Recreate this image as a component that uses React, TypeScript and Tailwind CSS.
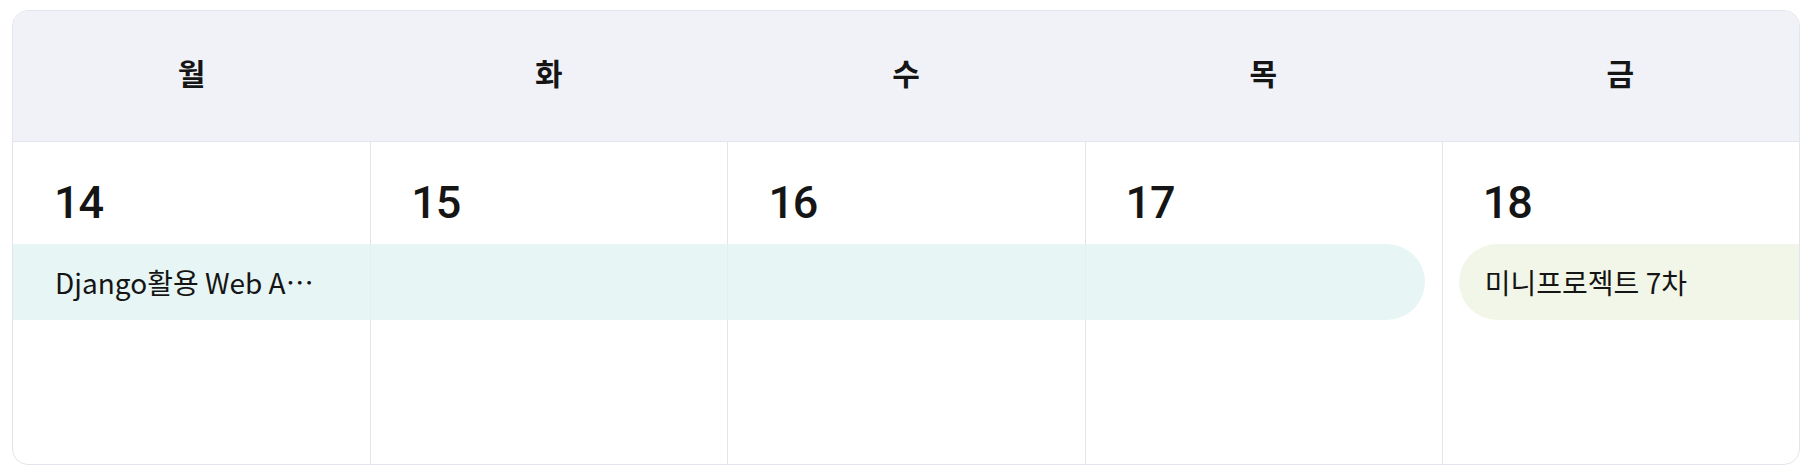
const DAYS = ["월", "화", "수", "목", "금"];
const DATES = [14, 15, 16, 17, 18];

const COL_START = [
  "col-start-1",
  "col-start-2",
  "col-start-3",
  "col-start-4",
  "col-start-5",
];

export default function App() {
  return (
    <div
      className="pt-[10px] pl-[12px] pr-[10px] bg-white"
      style={{ fontFamily: '"Noto Sans CJK KR", "Noto Sans", sans-serif' }}
    >
      <div className="h-[455px] flex flex-col rounded-2xl border border-[#e3e5ec] overflow-hidden text-[#151515]">
        {/* weekday header */}
        <div className="grid grid-cols-5 h-[131px] shrink-0 bg-[#f0f2f7] border-b border-[#e3e5ec]">
          {DAYS.map((d) => (
            <div key={d} className="flex items-center justify-center text-[30px] font-bold pb-[8px]">
              {d}
            </div>
          ))}
        </div>

        {/* week body */}
        <div className="grid grid-cols-5 grid-rows-[102px_76px_1fr] flex-1">
          {DATES.map((n, i) => (
            <div
              key={`cell-${n}`}
              className={`${COL_START[i]} row-start-1 row-span-3 ${i > 0 ? "border-l border-[#e3e5ec]" : ""}`}
            />
          ))}
          {DATES.map((n, i) => (
            <div
              key={`date-${n}`}
              className={`${COL_START[i]} row-start-1 pl-[41px] pt-[38px] text-[45px] font-medium leading-none tracking-tight font-['Roboto',sans-serif]`}
            >
              {n}
            </div>
          ))}

          <div className="col-start-1 col-span-4 row-start-2 mr-[17px] rounded-r-full bg-[#e2f2f2]/80 flex items-center pl-[42px] text-[28px]">
            <span className="block max-w-[262px] truncate">Django활용 Web Application 개발</span>
          </div>

          <div className="col-start-5 row-start-2 ml-[17px] rounded-l-full bg-[#f2f6e8] flex items-center pl-[26px] text-[28px]">
            <span className="truncate">미니프로젝트 7차</span>
          </div>
        </div>
      </div>
    </div>
  );
}
